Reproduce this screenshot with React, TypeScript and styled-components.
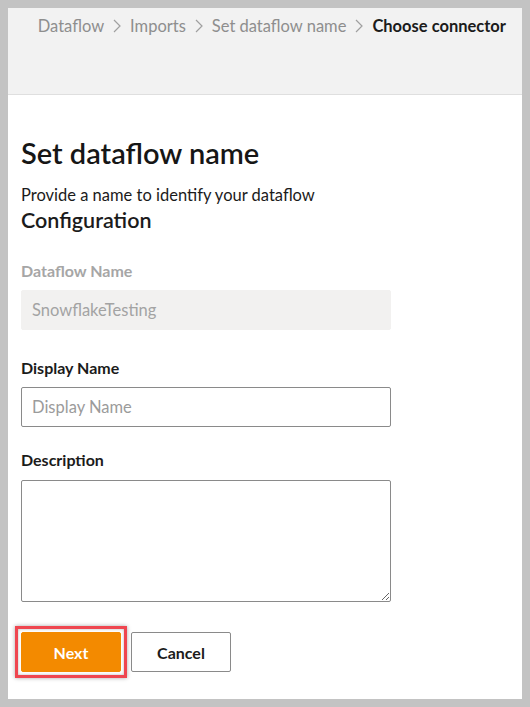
import React, { ReactElement } from "react";
import styled, { createGlobalStyle } from "styled-components";

const GlobalStyle = createGlobalStyle`
  html, body {
    margin: 0;
    padding: 0;
  }
  body {
    font-family: Lato, "Noto Sans", "Liberation Sans", sans-serif;
    color: #1b1b1b;
  }
`;

const Frame = styled.div`
  box-sizing: border-box;
  width: 530px;
  height: 707px;
  padding: 8px;
  background: #c3c3c3;
`;
const Panel = styled.div`
  height: 100%;
  background: #ffffff;
  display: flex;
  flex-direction: column;
`;
const Header = styled.div`
  box-sizing: border-box;
  height: 87px;
  background: #f2f2f2;
  border-bottom: 1px solid #dfdfdf;
  display: flex;
  justify-content: flex-end;
  padding: 8px 16px 0 0;
`;
const Crumbs = styled.nav`
  display: flex;
  align-items: center;
  height: 20px;
  font-size: 16.5px;
  white-space: nowrap;
`;
const Crumb = styled.span<{ $current?: boolean }>`
  color: ${(p) => (p.$current ? "#1b1b1b" : "#8e8e8e")};
  font-weight: ${(p) => (p.$current ? 700 : 400)};
`;
const Sep = styled.span`
  color: #9a9a9a;
  margin: 0 8px;
  display: inline-flex;
`;
const Body = styled.div`
  padding: 40px 13px 0;
  display: flex;
  flex-direction: column;
`;
const Title = styled.h1`
  margin: 0;
  font-size: 29px;
  line-height: 36px;
  font-weight: 600;
  color: #161616;
`;
const Lead = styled.p`
  margin: 13px 0 0;
  font-size: 16.5px;
  line-height: 22px;
`;
const Section = styled.h2`
  margin: 1px 0 0;
  font-size: 21.5px;
  line-height: 26px;
  font-weight: 600;
`;
const Form = styled.div`
  display: flex;
  flex-direction: column;
  width: 370px;
  margin-top: 28px;
`;
const Label = styled.label<{ $disabled?: boolean; $top?: number }>`
  display: block;
  margin-top: ${(p) => p.$top ?? 0}px;
  font-size: 16px;
  line-height: 20px;
  font-weight: 700;
  color: ${(p) => (p.$disabled ? "#a6a6a6" : "#1b1b1b")};
`;
const Input = styled.input`
  box-sizing: border-box;
  width: 100%;
  height: 40px;
  margin-top: 9px;
  padding: 0 10px;
  border: 1px solid #8a8a8a;
  border-radius: 2px;
  font-family: inherit;
  font-size: 16.5px;
  color: #1b1b1b;
  background: #fff;
  &::placeholder {
    color: #9b9b9b;
  }
  &:disabled {
    border-color: #f2f1f0;
    background: #f2f1f0;
    color: #a3a3a3;
  }
`;
const TextArea = styled.textarea`
  box-sizing: border-box;
  width: 100%;
  height: 122px;
  margin-top: 10px;
  padding: 8px 10px;
  border: 1px solid #8a8a8a;
  border-radius: 2px;
  font-family: inherit;
  font-size: 16px;
  resize: vertical;
  display: block;
`;
const Actions = styled.div`
  display: flex;
  gap: 10px;
  margin-top: 30px;
`;
const Highlight = styled.span`
  display: inline-flex;
  margin: -6px;
  padding: 3px;
  border: 3px solid #ef4650;
  box-shadow: 0 0 4px rgba(0, 0, 0, 0.35), inset 0 0 3px rgba(0, 0, 0, 0.3);
`;
const Button = styled.button<{ $primary?: boolean }>`
  box-sizing: border-box;
  width: 100px;
  height: 40px;
  border-radius: 2px;
  font-family: inherit;
  font-size: 16px;
  font-weight: 700;
  cursor: pointer;
  border: 1px solid ${(p) => (p.$primary ? "#f38a00" : "#8a8a8a")};
  background: ${(p) => (p.$primary ? "#f38a00" : "#ffffff")};
  color: ${(p) => (p.$primary ? "#ffffff" : "#1b1b1b")};
`;

const Chevron = () => (
  <svg width="10" height="16" viewBox="0 0 10 16" fill="none">
    <path d="M2 2l6 6-6 6" stroke="#a0a0a0" strokeWidth="1.2" />
  </svg>
);

const crumbs = ["Dataflow", "Imports", "Set dataflow name"];

export default function App(): ReactElement {
  return (
    <>
      <GlobalStyle />
      <Frame>
        <Panel>
          <Header>
            <Crumbs>
              {crumbs.map((c) => (
                <React.Fragment key={c}>
                  <Crumb>{c}</Crumb>
                  <Sep><Chevron /></Sep>
                </React.Fragment>
              ))}
              <Crumb $current>Choose connector</Crumb>
            </Crumbs>
          </Header>
          <Body>
            <Title>Set dataflow name</Title>
            <Lead>Provide a name to identify your dataflow</Lead>
            <Section>Configuration</Section>
            <Form>
              <Label $disabled>Dataflow Name</Label>
              <Input disabled value="SnowflakeTesting" readOnly />
              <Label $top={28}>Display Name</Label>
              <Input placeholder="Display Name" />
              <Label $top={23}>Description</Label>
              <TextArea />
            </Form>
            <Actions>
              <Highlight>
                <Button $primary>Next</Button>
              </Highlight>
              <Button>Cancel</Button>
            </Actions>
          </Body>
        </Panel>
      </Frame>
    </>
  );
}
